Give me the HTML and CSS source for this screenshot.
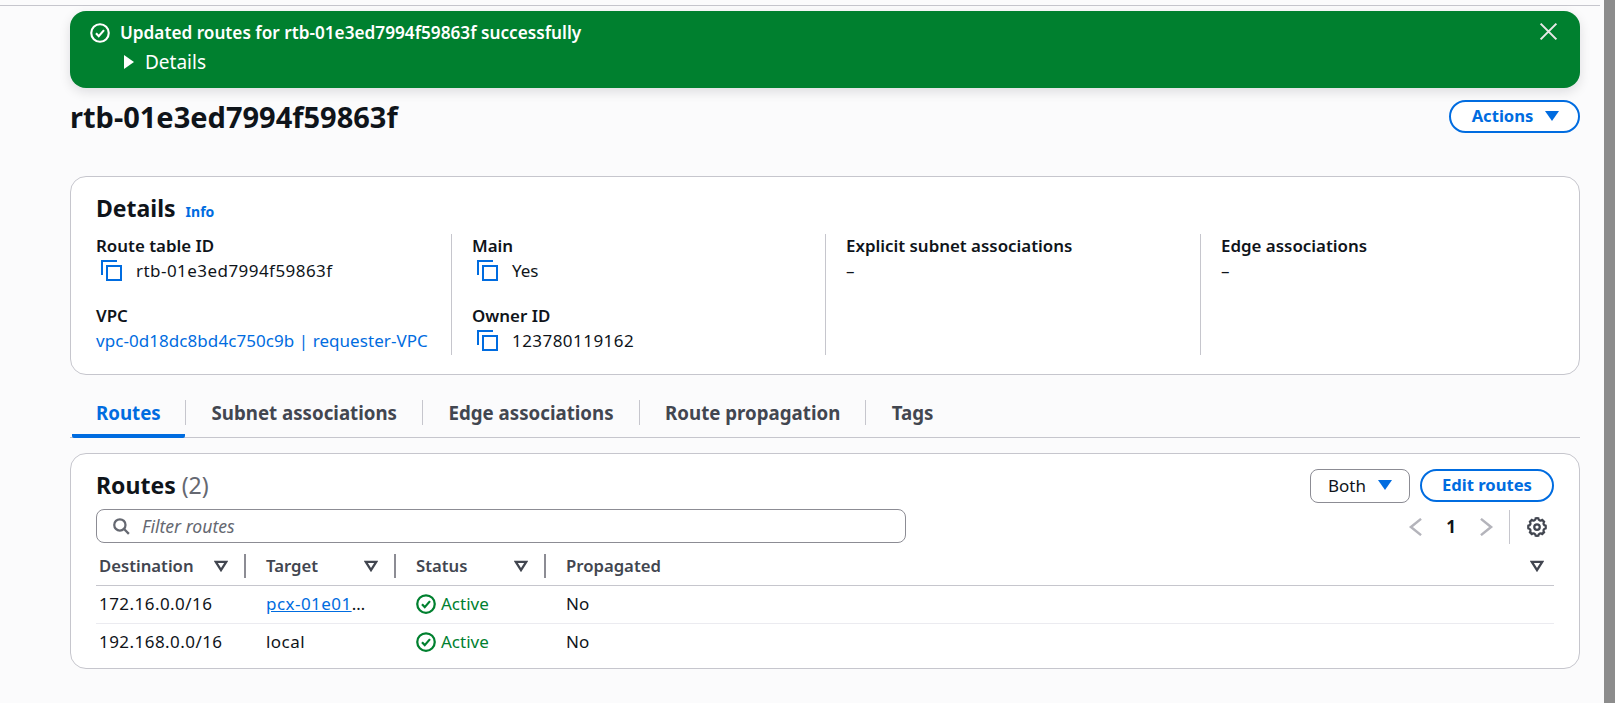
FILE: index.html
```html
<!DOCTYPE html>
<html lang="en">
<head>
    <meta charset="UTF-8">
    <title>rtb-01e3ed7994f59863f</title>
    <link rel="stylesheet" href="styles.css">
</head>
<body>
    <div class="page">
        <div class="flash">
            <svg class="flash-icon" viewBox="0 0 16 16"><circle cx="8" cy="8" r="7"/><path d="M4.8 8.2l2.2 2.3 4.2-4.8"/></svg>
            <div class="flash-body">
                <div class="flash-title">Updated routes for rtb-01e3ed7994f59863f successfully</div>
                <div class="flash-details"><span class="caret-right"></span>Details</div>
            </div>
            <svg class="flash-close" viewBox="0 0 16 16"><path d="M2 2l12 12M14 2L2 14"/></svg>
        </div>

        <div class="page-header">
            <h1>rtb-01e3ed7994f59863f</h1>
            <button class="btn actions">Actions<span class="caret-down"></span></button>
        </div>

        <section class="card details">
            <h2>Details <a class="info">Info</a></h2>
            <div class="details-grid">
                <div class="col">
                    <div class="item">
                        <div class="label">Route table ID</div>
                        <div class="value copy"><svg class="copy-icon" viewBox="0 0 21 21"><path d="M1 15V1h15"/><rect x="6" y="6" width="14" height="14"/></svg><span class="num">rtb-01e3ed7994f59863f</span></div>
                    </div>
                    <div class="item">
                        <div class="label">VPC</div>
                        <div class="value"><a class="vpc">vpc-0d18dc8bd4c750c9b | requester-VPC</a></div>
                    </div>
                </div>
                <div class="col">
                    <div class="item">
                        <div class="label">Main</div>
                        <div class="value copy"><svg class="copy-icon" viewBox="0 0 21 21"><path d="M1 15V1h15"/><rect x="6" y="6" width="14" height="14"/></svg>Yes</div>
                    </div>
                    <div class="item">
                        <div class="label">Owner ID</div>
                        <div class="value copy"><svg class="copy-icon" viewBox="0 0 21 21"><path d="M1 15V1h15"/><rect x="6" y="6" width="14" height="14"/></svg><span class="num">123780119162</span></div>
                    </div>
                </div>
                <div class="col">
                    <div class="item">
                        <div class="label">Explicit subnet associations</div>
                        <div class="value">–</div>
                    </div>
                </div>
                <div class="col">
                    <div class="item">
                        <div class="label">Edge associations</div>
                        <div class="value">–</div>
                    </div>
                </div>
            </div>
        </section>

        <nav class="tabs">
            <a class="tab active">Routes</a>
            <a class="tab">Subnet associations</a>
            <a class="tab">Edge associations</a>
            <a class="tab">Route propagation</a>
            <a class="tab">Tags</a>
        </nav>

        <section class="card routes">
            <div class="routes-top">
                <h2>Routes <span class="count">(2)</span></h2>
                <div class="routes-actions">
                    <button class="btn select">Both<span class="caret-down"></span></button>
                    <button class="btn edit">Edit routes</button>
                </div>
            </div>
            <div class="filter-row">
                <div class="filter">
                    <svg class="search-icon" viewBox="0 0 16 16"><circle cx="7" cy="7" r="5"/><path d="M10.7 10.7L15 15"/></svg>
                    <span>Filter routes</span>
                </div>
                <div class="pager">
                    <svg class="chev" viewBox="0 0 16 16"><path d="M12.5 .8L3.5 8l9 7.2"/></svg>
                    <span class="page-num">1</span>
                    <svg class="chev" viewBox="0 0 16 16"><path d="M3.5 .8l9 7.2-9 7.2"/></svg>
                    <span class="pager-div"></span>
                    <svg class="gear" viewBox="0 0 16 16"><path d="M13.33 5.79a1.94 1.94 0 0 1 .29-1.97 7 7 0 0 0-1.44-1.44 1.94 1.94 0 0 1-3.16-1.31 7 7 0 0 0-2.04 0 1.94 1.94 0 0 1-3.16 1.31 7 7 0 0 0-1.44 1.44 1.94 1.94 0 0 1-1.31 3.16 7 7 0 0 0 0 2.04 1.94 1.94 0 0 1 1.31 3.16 7 7 0 0 0 1.44 1.44 1.94 1.94 0 0 1 3.16 1.31 7 7 0 0 0 2.04 0 1.94 1.94 0 0 1 3.16-1.31 7 7 0 0 0 1.44-1.44 1.94 1.94 0 0 1 1.31-3.16 7 7 0 0 0 0-2.04 1.94 1.94 0 0 1-1.6-1.19Z"/><circle cx="8" cy="8" r="2.2"/></svg>
                </div>
            </div>
            <div class="table">
                <div class="row head">
                    <div class="cell c1">Destination<svg class="filter-tri" viewBox="0 0 12 10"><path d="M1.5 1.5h9L6 8.5z"/></svg></div>
                    <div class="cell c2">Target<svg class="filter-tri" viewBox="0 0 12 10"><path d="M1.5 1.5h9L6 8.5z"/></svg></div>
                    <div class="cell c3">Status<svg class="filter-tri" viewBox="0 0 12 10"><path d="M1.5 1.5h9L6 8.5z"/></svg></div>
                    <div class="cell c4">Propagated<svg class="filter-tri" viewBox="0 0 12 10"><path d="M1.5 1.5h9L6 8.5z"/></svg></div>
                </div>
                <div class="row">
                    <div class="cell c1 num">172.16.0.0/16</div>
                    <div class="cell c2"><a class="target num"><u>pcx-01e01</u>…</a></div>
                    <div class="cell c3 status"><svg class="ok-icon" viewBox="0 0 16 16"><circle cx="8" cy="8" r="7"/><path d="M4.8 8.2l2.2 2.3 4.2-4.8"/></svg>Active</div>
                    <div class="cell c4">No</div>
                </div>
                <div class="row">
                    <div class="cell c1 num">192.168.0.0/16</div>
                    <div class="cell c2 num">local</div>
                    <div class="cell c3 status"><svg class="ok-icon" viewBox="0 0 16 16"><circle cx="8" cy="8" r="7"/><path d="M4.8 8.2l2.2 2.3 4.2-4.8"/></svg>Active</div>
                    <div class="cell c4">No</div>
                </div>
            </div>
        </section>
    </div>
    <div class="scrollbar"></div>
</body>
</html>
```

FILE: styles.css
```css
* {
    box-sizing: border-box;
}

body {
    margin: 0;
    height: 703px;
    overflow: hidden;
    display: flex;
    background: linear-gradient(to right, #fbfbfc 1604px, #ffffff 1604px);
    color: #0f141a;
    font-family: "Noto Sans", sans-serif;
    font-size: 17px;
    line-height: 24px;
}

a {
    color: #006ce0;
}

.num {
    letter-spacing: 0.45px;
}

.vpc {
    letter-spacing: 0.06px;
}

.page {
    width: 1600px;
    height: 698px;
    margin-top: 5px;
    padding: 5px 20px 0 70px;
    border-top: 1px solid #c6c6cd;
}

.scrollbar {
    width: 11px;
    margin-left: 4px;
    background-color: #8c8c8c;
}

.flash {
    display: flex;
    height: 77px;
    padding: 10px 21px 0 20px;
    border-radius: 16px;
    background-color: #00802f;
    color: #ffffff;
    box-shadow: 0 4px 12px rgba(0, 7, 22, 0.12);
}

.flash-icon {
    width: 20px;
    height: 20px;
    margin-top: 2px;
    margin-right: 10px;
    fill: none;
    stroke: #ffffff;
    stroke-width: 1.7;
}

.flash-body {
    flex: 1;
}

.flash-title {
    font-size: 17.2px;
    font-weight: 600;
}

.flash-details {
    display: flex;
    align-items: center;
    margin-top: 5px;
    font-size: 19px;
}

.caret-right {
    width: 0;
    height: 0;
    margin: 0 11px 0 4px;
    border-top: 7px solid transparent;
    border-bottom: 7px solid transparent;
    border-left: 10px solid #ffffff;
}

.flash-close {
    width: 21px;
    height: 21px;
    fill: none;
    stroke: #e8e8e8;
    stroke-width: 1.6;
}

.page-header {
    display: flex;
    justify-content: space-between;
    margin-top: 12px;
    margin-bottom: 43px;
}

h1 {
    margin: 0;
    font-size: 29px;
    line-height: 33px;
    font-weight: 700;
}

.btn {
    display: flex;
    align-items: center;
    justify-content: center;
    height: 33px;
    padding: 0 0 2px 0;
    border: 2px solid #006ce0;
    border-radius: 20px;
    background-color: #ffffff;
    color: #006ce0;
    font-family: inherit;
    font-size: 16.6px;
    font-weight: 700;
}

.actions {
    width: 131px;
    padding-left: 2px;
}

.caret-down {
    width: 0;
    height: 0;
    margin-left: 12px;
    border-left: 7px solid transparent;
    border-right: 7px solid transparent;
    border-top: 10px solid #006ce0;
}

.card {
    border: 1px solid #c6c6cd;
    border-radius: 16px;
    background-color: #ffffff;
}

h2 {
    margin: 0;
    font-size: 23px;
    line-height: 30px;
    font-weight: 700;
}

.details {
    height: 199px;
    padding: 16px 25px 0 25px;
}

.info {
    margin-left: 4px;
    font-size: 14px;
    font-weight: 700;
}

.details-grid {
    display: grid;
    grid-template-columns: 356px 374px 375px 1fr;
    margin-top: 7px;
}

.col {
    height: 121px;
    border-right: 1px solid #c6c6cd;
}

.col + .col {
    padding-left: 20px;
}

.col:last-child {
    border-right: none;
}

.item {
    margin-bottom: 21px;
}

.label {
    font-size: 16.9px;
    font-weight: 600;
}

.value {
    display: flex;
    align-items: center;
    height: 25px;
}

.copy-icon {
    width: 21px;
    height: 21px;
    margin: 0 14px 0 5px;
    fill: none;
    stroke: #006ce0;
    stroke-width: 2;
}

.tabs {
    display: flex;
    height: 63px;
    padding-top: 16px;
    border-bottom: 1px solid #c6c6cd;
}

.tab {
    height: 47px;
    padding: 10px 25px 0 26.5px;
    position: relative;
    color: #424650;
    font-size: 18.7px;
    font-weight: 700;
}

.tab + .tab::before {
    content: "";
    position: absolute;
    left: 0;
    top: 9px;
    height: 25px;
    border-left: 1px solid #c6c6cd;
}

.tab.active {
    width: 113px;
    margin-left: 2px;
    padding-left: 24px;
    color: #006ce0;
    border-bottom: 4px solid #006ce0;
    border-radius: 2px;
}

.routes {
    height: 216px;
    margin-top: 15px;
    padding: 15px 25px 0 25px;
}

.routes-top {
    display: flex;
    justify-content: space-between;
}

.routes-top h2 {
    margin-top: 1px;
}

.count {
    color: #656871;
    font-weight: 400;
}

.routes-actions {
    display: flex;
    gap: 10px;
}

.select {
    width: 100px;
    height: 34px;
    border: 1px solid #8c8c94;
    border-radius: 8px;
    color: #0f141a;
    font-size: 17px;
    font-weight: 400;
}

.edit {
    width: 134px;
}

.filter-row {
    display: flex;
    justify-content: space-between;
    height: 34px;
    margin-top: 6px;
}

.filter {
    display: flex;
    align-items: center;
    width: 810px;
    height: 34px;
    padding-left: 15px;
    border: 1px solid #8c8c94;
    border-radius: 8px;
    background-color: #ffffff;
    color: #656871;
    font-size: 17.6px;
    font-style: italic;
}

.search-icon {
    width: 18px;
    height: 18px;
    margin-right: 12px;
    fill: none;
    stroke: #656871;
    stroke-width: 2;
}

.pager {
    display: flex;
    align-items: center;
    height: 34px;
    padding-top: 1px;
    padding-right: 7px;
}

.chev {
    width: 18px;
    height: 18px;
    fill: none;
    stroke: #b4b4bb;
    stroke-width: 2.2;
}

.page-num {
    width: 52px;
    text-align: center;
    font-weight: 700;
}

.pager-div {
    height: 34px;
    margin: 0 17px 0 14px;
    border-left: 1px solid #c6c6cd;
}

.gear {
    width: 20px;
    height: 20px;
    fill: none;
    stroke: #424650;
    stroke-width: 1.8;
}

.row {
    display: flex;
    align-items: center;
    height: 38px;
    padding-bottom: 2px;
    border-bottom: 1px solid #ebebf0;
}

.row:last-child {
    border-bottom: none;
}

.row.head {
    height: 43px;
    padding-top: 3px;
    padding-bottom: 0;
    border-bottom: 1px solid #c6c6cd;
    color: #424650;
    font-size: 16.7px;
    font-weight: 600;
}

.cell {
    display: flex;
    align-items: center;
    padding-left: 20px;
}

.c1 {
    width: 150px;
    padding-left: 3px;
}

.c2 {
    width: 150px;
}

.c3 {
    width: 150px;
}

.c4 {
    flex: 1;
}

.head .cell {
    justify-content: space-between;
    height: 24px;
    padding-right: 16px;
    border-right: 2px solid #8c8c94;
}

.head .c4 {
    border-right: none;
    padding-right: 10px;
}

.filter-tri {
    width: 14px;
    height: 12px;
    fill: none;
    stroke: #424650;
    stroke-width: 2;
}

.target {
    color: #0f141a;
}

.target u {
    color: #006ce0;
}

.status {
    color: #00802f;
}

.ok-icon {
    width: 20px;
    height: 20px;
    margin-right: 5px;
    fill: none;
    stroke: #00802f;
    stroke-width: 1.8;
}
```
